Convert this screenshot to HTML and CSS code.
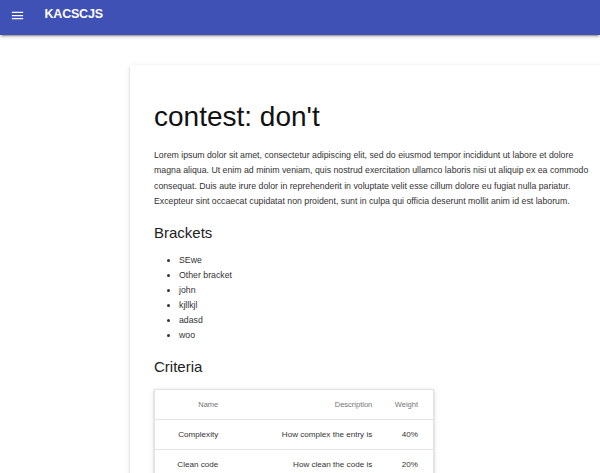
FILE: index.html
```html
<!DOCTYPE html>
<html lang="en">
<head>
<meta charset="utf-8">
<title>KACSCJS</title>
<link rel="stylesheet" href="styles.css">
</head>
<body>
<header class="topbar">
  <svg class="menu-icon" viewBox="0 0 24 24" width="15" height="15" aria-hidden="true">
    <path d="M3 18h18v-2H3v2zm0-5h18v-2H3v2zm0-7v2h18V6H3z" fill="#fff"/>
  </svg>
  <span class="app-title">KACSCJS</span>
</header>
<main class="content">
  <section class="card">
    <h2 class="page-title">contest: don't</h2>
    <p class="intro">Lorem ipsum dolor sit amet, consectetur adipiscing elit, sed do eiusmod tempor incididunt ut labore et dolore magna aliqua. Ut enim ad minim veniam, quis nostrud exercitation ullamco laboris nisi ut aliquip ex ea commodo consequat. Duis aute irure dolor in reprehenderit in voluptate velit esse cillum dolore eu fugiat nulla pariatur. Excepteur sint occaecat cupidatat non proident, sunt in culpa qui officia deserunt mollit anim id est laborum.</p>
    <h4 class="section-title">Brackets</h4>
    <ul class="bracket-list">
      <li>SEwe</li>
      <li>Other bracket</li>
      <li>john</li>
      <li>kjllkjl</li>
      <li>adasd</li>
      <li>woo</li>
    </ul>
    <h4 class="section-title criteria-title">Criteria</h4>
    <table class="data-table">
      <colgroup>
        <col class="col-name">
        <col class="col-desc">
        <col class="col-weight">
      </colgroup>
      <thead>
        <tr><th>Name</th><th>Description</th><th>Weight</th></tr>
      </thead>
      <tbody>
        <tr><td>Complexity</td><td>How complex the entry is</td><td>40%</td></tr>
        <tr><td>Clean code</td><td>How clean the code is</td><td>20%</td></tr>
      </tbody>
    </table>
  </section>
</main>
</body>
</html>
```
FILE: styles.css
```css
html, body {
  margin: 0;
  padding: 0;
  background: #fff;
  overflow: hidden;
  font-family: "Liberation Sans", Arial, Helvetica, sans-serif;
  color: rgba(0, 0, 0, 0.87);
}

.topbar {
  height: 35px;
  box-sizing: border-box;
  background: #3f51b5;
  display: flex;
  align-items: flex-start;
  padding: 7px 0 0 9.5px;
  box-shadow: 0 2px 2px 0 rgba(0,0,0,.14), 0 3px 1px -2px rgba(0,0,0,.2), 0 1px 5px 0 rgba(0,0,0,.12);
  position: relative;
  z-index: 2;
}

.menu-icon {
  display: block;
  margin-top: 1px;
  flex: none;
}

.app-title {
  margin-left: 20px;
  color: #fff;
  font-weight: bold;
  font-size: 12.5px;
  line-height: 15px;
  letter-spacing: -0.2px;
}

.content {
  padding: 30px 0 0 130px;
}

.card {
  width: 440px;
  padding: 37px 24px 0;
  background: #fff;
  min-height: 500px;
  box-shadow: 0 2px 2px 0 rgba(0,0,0,.14), 0 3px 1px -2px rgba(0,0,0,.2), 0 1px 5px 0 rgba(0,0,0,.12);
}

.page-title {
  margin: 0;
  font-size: 28px;
  line-height: 30px;
  font-weight: normal;
  color: #111;
}

.intro {
  margin: 16px 0 0;
  font-size: 8.75px;
  line-height: 15.4px;
  color: #333;
}

.section-title {
  margin: 14px 0 0;
  font-size: 15px;
  line-height: 18px;
  font-weight: normal;
  color: #222;
}

.bracket-list {
  margin: 11.5px 0 0;
  padding-left: 25px;
  font-size: 8.75px;
  line-height: 15px;
  color: #333;
}

.criteria-title {
  margin-top: 15px;
}

.data-table {
  margin-top: 12.5px;
  border-collapse: collapse;
  border: 1px solid #e3e3e3;
  table-layout: fixed;
  width: 279px;
  box-shadow: 0 2px 2px 0 rgba(0,0,0,.14), 0 3px 1px -2px rgba(0,0,0,.2), 0 1px 5px 0 rgba(0,0,0,.12);
}

.col-name { width: 75px; }
.col-desc { width: 154px; }
.col-weight { width: 50px; }

.data-table th,
.data-table td {
  text-align: right;
  padding: 0 11.25px;
  white-space: nowrap;
}

.data-table th:first-child,
.data-table td:first-child {
  padding-left: 15px;
}

.data-table th:last-child,
.data-table td:last-child {
  padding-right: 15px;
}

.data-table th {
  height: 29px;
  font-size: 7.5px;
  font-weight: normal;
  color: #757575;
  vertical-align: middle;
}

.data-table td {
  height: 29px;
  font-size: 8.1px;
  color: #333;
  border-top: 1px solid #e3e3e3;
}
```
